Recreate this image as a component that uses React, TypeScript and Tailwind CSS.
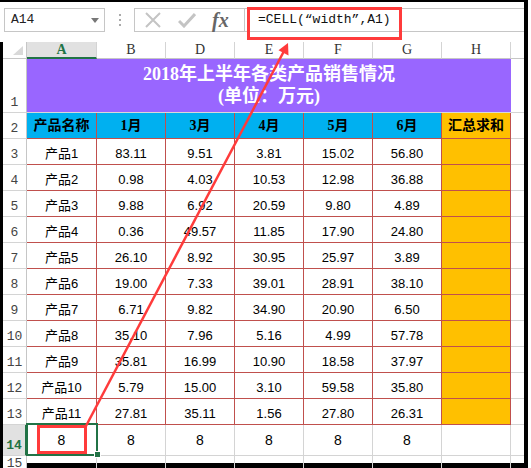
import React from 'react';

const cols = ['w-[70px]', 'w-[69px]', 'w-[69px]', 'w-[69px]', 'w-[69px]', 'w-[69px]', 'w-[69px]'];
const letters = ['A', 'B', 'D', 'E', 'F', 'G', 'H'];
const heads = ['产品名称', '1月', '3月', '4月', '5月', '6月'];

const rows = [
    ['产品1', '83.11', '9.51', '3.81', '15.02', '56.80'],
    ['产品2', '0.98', '4.03', '10.53', '12.98', '36.88'],
    ['产品3', '9.88', '6.92', '20.59', '9.80', '4.89'],
    ['产品4', '0.36', '49.57', '11.85', '17.90', '24.80'],
    ['产品5', '26.10', '8.92', '30.95', '25.97', '3.89'],
    ['产品6', '19.00', '7.33', '39.01', '28.91', '38.10'],
    ['产品7', '6.71', '9.82', '34.90', '20.90', '6.50'],
    ['产品8', '35.10', '7.96', '5.16', '4.99', '57.78'],
    ['产品9', '35.81', '16.99', '10.90', '18.58', '37.97'],
    ['产品10', '5.79', '15.00', '3.10', '59.58', '35.80'],
    ['产品11', '27.81', '35.11', '1.56', '27.80', '26.31'],
];

const sans = "font-['Liberation_Sans','Noto_Sans_CJK_SC',sans-serif]";

function RowNum({ n, active = false }: { n?: string; active?: boolean }) {
    return (
        <div
            className={`flex w-[24px] shrink-0 items-end justify-center border-b border-b-[#d4d4d4] pb-[2px] font-['Liberation_Mono',monospace] text-[13px] leading-[15px] ${
                active
                    ? 'border-r-2 border-r-[#217346] bg-[#e1e1e1] font-bold text-[#217346]'
                    : 'border-r border-r-[#c6c6c6] bg-white text-[#444]'
            }`}
        >
            {n}
        </div>
    );
}

function Filler() {
    return <div className="flex-1 border-b border-[#d4d4d4]" />;
}

export default function App() {
    return (
        <div className="relative h-[468px] w-[531px] overflow-hidden bg-white">
            <div className="flex h-[468px] w-[528px] flex-col border-t-2 border-r-4 border-b-[5px] border-black">
                {/* formula bar */}
                <div className="flex h-[40px] shrink-0 items-start pt-[6px]">
                    <div className="ml-[4px] flex h-[24px] w-[101px] items-center justify-between border border-[#c6c6c6] pr-[5px] pl-[6px]">
                        <span className="font-['Liberation_Mono',monospace] text-[13px] text-[#222]">A14</span>
                        <svg width="8" height="5" viewBox="0 0 8 5">
                            <path d="M0 0h8L4 5z" fill="#777" />
                        </svg>
                    </div>
                    <div className="flex h-[24px] w-[29px] flex-col items-center justify-center gap-[3px]">
                        <span className="size-[2px] bg-[#aaa]" />
                        <span className="size-[2px] bg-[#aaa]" />
                        <span className="size-[2px] bg-[#aaa]" />
                    </div>
                    <div className="flex h-[24px] w-[111px] items-center border border-[#c6c6c6] pl-[9px]">
                        <svg width="18" height="16" viewBox="0 0 18 16">
                            <path d="M2 1l14 14M16 1L2 15" stroke="#c4c4c4" strokeWidth="2" fill="none" />
                        </svg>
                        <svg className="ml-[16px]" width="18" height="16" viewBox="0 0 18 16">
                            <path d="M1 9l5 5L17 2" stroke="#c4c4c4" strokeWidth="3" fill="none" />
                        </svg>
                        <span className="ml-[16px] font-['Liberation_Serif',serif] text-[20px] leading-none font-bold text-[#666] italic">
                            fx
                        </span>
                    </div>
                    <div className="flex h-[24px] flex-1 items-center border-y border-[#c6c6c6] pl-[13px] font-['Liberation_Mono',monospace] text-[13px] text-[#111]">
                        =CELL(“width”,A1)
                    </div>
                </div>

                {/* sheet */}
                <div className="flex flex-1 flex-col border-l-[3px] border-black">
                    {/* column header */}
                    <div className="flex h-[17px] shrink-0">
                        <div className="flex w-[24px] shrink-0 items-end justify-end border-r border-b border-[#c6c6c6] pr-[3px] pb-[3px]">
                            <svg width="10" height="9" viewBox="0 0 10 9">
                                <path d="M10 0v9H0z" fill="#d9d9d9" />
                            </svg>
                        </div>
                        {letters.map((l, i) => (
                            <div
                                key={l}
                                className={`${cols[i]} flex shrink-0 items-center justify-center border-r border-r-[#d4d4d4] font-['Liberation_Serif',serif] text-[14px] leading-none ${
                                    i === 0
                                        ? 'border-b-2 border-b-[#217346] bg-[#e1e1e1] font-bold text-[#217346]'
                                        : 'border-b border-b-[#c6c6c6] text-[#333]'
                                }`}
                            >
                                {l}
                            </div>
                        ))}
                        <div className="flex-1 border-b border-[#c6c6c6]" />
                    </div>

                    {/* row 1 title */}
                    <div className="flex h-[54px] shrink-0">
                        <RowNum n="1" />
                        <div className="flex w-[484px] shrink-0 flex-col items-center justify-center border-b border-[#d9d9d9] bg-[#9966ff] pb-[2px] font-['Liberation_Serif','Noto_Sans_CJK_SC',serif] text-[18px] leading-[22px] font-bold text-white">
                            <span>2018年上半年各类产品销售情况</span>
                            <span>(单位：万元)</span>
                        </div>
                        <Filler />
                    </div>

                    {/* row 2 headers */}
                    <div className="flex h-[26px] shrink-0">
                        <RowNum n="2" />
                        {heads.map((h, i) => (
                            <div
                                key={h}
                                className={`${cols[i]} flex shrink-0 items-center justify-center border-r border-b border-[#c0504d] bg-[#00b0f0] font-['Liberation_Serif','Noto_Sans_CJK_SC',serif] text-[14px] font-bold text-black`}
                            >
                                {h}
                            </div>
                        ))}
                        <div className="flex w-[69px] shrink-0 items-center justify-center border-r border-b border-[#c0504d] bg-[#ffc000] font-['Liberation_Serif','Noto_Sans_CJK_SC',serif] text-[14px] font-bold text-black">
                            汇总求和
                        </div>
                        <Filler />
                    </div>

                    {/* data rows */}
                    {rows.map((r, ri) => (
                        <div key={ri} className="flex h-[26px] shrink-0">
                            <RowNum n={String(ri + 3)} />
                            {r.map((v, ci) => (
                                <div
                                    key={ci}
                                    className={`${cols[ci]} ${sans} flex shrink-0 items-end justify-center border-r border-b border-[#c0504d] pb-[3px] text-[13px] leading-[15px] text-black`}
                                >
                                    {v}
                                </div>
                            ))}
                            <div className="w-[69px] shrink-0 border-r border-b border-[#c0504d] bg-[#ffc000]" />
                            <Filler />
                        </div>
                    ))}

                    {/* row 14 */}
                    <div className="flex h-[31px] shrink-0">
                        <RowNum n="14" active />
                        {cols.map((c, i) => (
                            <div
                                key={i}
                                className={`${c} ${sans} flex shrink-0 items-center justify-center border-r border-b border-[#d4d4d4] text-[14px] text-black`}
                            >
                                {i < 6 ? '8' : ''}
                            </div>
                        ))}
                        <Filler />
                    </div>

                    {/* row 15 */}
                    <div className="flex flex-1">
                        <RowNum n="15" />
                        {cols.map((c, i) => (
                            <div key={i} className={`${c} shrink-0 border-r border-[#d4d4d4]`} />
                        ))}
                    </div>
                </div>
            </div>

            {/* selection */}
            <div className="absolute top-[423px] left-[26px] h-[33px] w-[72px] border-2 border-[#217346]" />
            <div className="absolute top-[451px] left-[94px] size-[7px] border border-white bg-[#217346]" />

            {/* annotations */}
            <div className="absolute top-[7px] left-[247px] h-[33px] w-[155px] border-[3px] border-[#ff3b3b]" />
            <div className="absolute top-[425px] left-[37px] h-[29px] w-[50px] border-[3px] border-[#ff3b3b]" />
            <svg className="pointer-events-none absolute inset-0" width="531" height="468">
                <line x1="86" y1="426" x2="283.5" y2="52" stroke="#ff3b3b" strokeWidth="2.5" />
                <path d="M288 43 L288.5 55.5 L278.5 50.3 Z" fill="#ff3b3b" />
            </svg>
        </div>
    );
}
